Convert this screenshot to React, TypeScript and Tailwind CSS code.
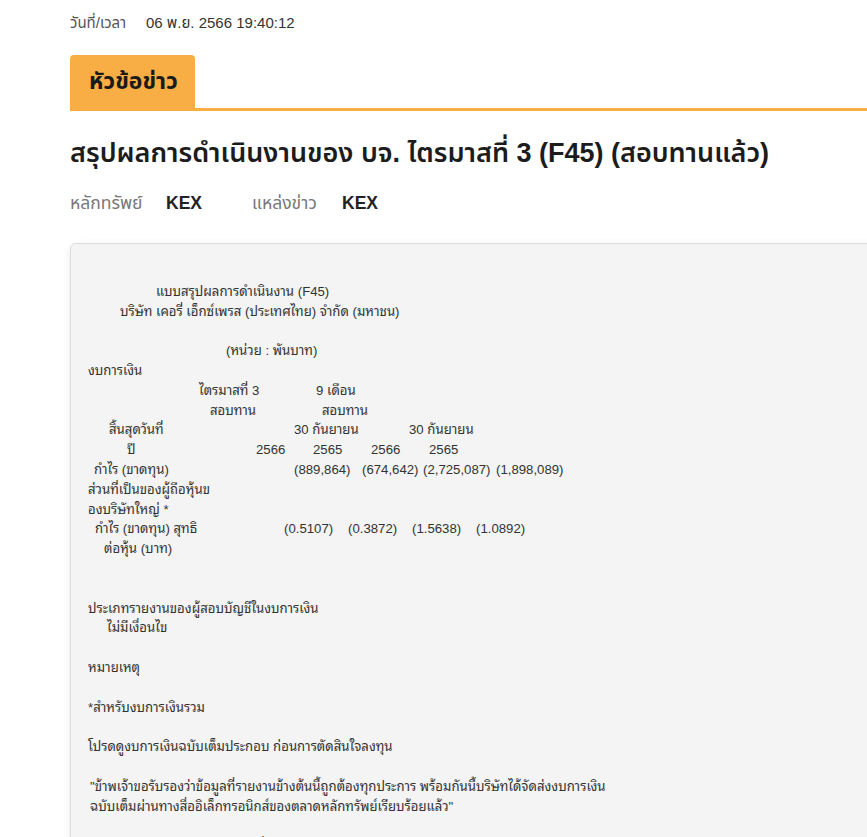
type Seg = [number, string];

// Each row of the announcement text: [x position on the page, text]
const BASE_X = 86;
const rows: Seg[][] = [
  [],
  [[156, "แบบสรุปผลการดำเนินงาน (F45)"]],
  [[120, "บริษัท เคอรี่ เอ็กซ์เพรส (ประเทศไทย) จำกัด (มหาชน)"]],
  [],
  [[226, "(หน่วย : พันบาท)"]],
  [[88, "งบการเงิน"]],
  [[199, "ไตรมาสที่ 3"], [316, "9 เดือน"]],
  [[210, "สอบทาน"], [322, "สอบทาน"]],
  [[109, "สิ้นสุดวันที่"], [294, "30 กันยายน"], [409, "30 กันยายน"]],
  [[127, "ปี"], [256, "2566"], [313, "2565"], [371, "2566"], [429, "2565"]],
  [[94, "กำไร (ขาดทุน)"], [294, "(889,864)"], [362, "(674,642)"], [423, "(2,725,087)"], [496, "(1,898,089)"]],
  [[88, "ส่วนที่เป็นของผู้ถือหุ้นข"]],
  [[88, "องบริษัทใหญ่ *"]],
  [[95, "กำไร (ขาดทุน) สุทธิ"], [284, "(0.5107)"], [348, "(0.3872)"], [412, "(1.5638)"], [476, "(1.0892)"]],
  [[104, "ต่อหุ้น (บาท)"]],
  [],
  [],
  [[88, "ประเภทรายงานของผู้สอบบัญชีในงบการเงิน"]],
  [[107, "ไม่มีเงื่อนไข"]],
  [],
  [[88, "หมายเหตุ"]],
  [],
  [[88, "*สำหรับงบการเงินรวม"]],
  [],
  [[88, "โปรดดูงบการเงินฉบับเต็มประกอบ ก่อนการตัดสินใจลงทุน"]],
  [],
  [[90, "\"ข้าพเจ้าขอรับรองว่าข้อมูลที่รายงานข้างต้นนี้ถูกต้องทุกประการ พร้อมกันนี้บริษัทได้จัดส่งงบการเงิน"]],
  [[90, "ฉบับเต็มผ่านทางสื่ออิเล็กทรอนิกส์ของตลาดหลักทรัพย์เรียบร้อยแล้ว\""]],
  [],
  [[220, "ลายมือชื่อ ____________________"]],
];

function TextRow({ segs }: { segs: Seg[] }) {
  if (segs.length === 0) return <div className="h-[19.8px]" />;
  return (
    <div className="flex h-[19.8px] items-center whitespace-pre" style={{ paddingLeft: segs[0][0] - BASE_X }}>
      {segs.map(([x, text], i) => {
        const next = segs[i + 1];
        return (
          <span key={i} className="shrink-0" style={next ? { width: next[0] - x } : undefined}>
            {text}
          </span>
        );
      })}
    </div>
  );
}

export default function App() {
  return (
    <div className="min-h-screen w-full overflow-hidden bg-white font-['Liberation_Sans','Noto_Sans_Thai',sans-serif] text-[#222]">
      <div className="w-[1100px] pl-[70px] pt-[12px]">
        {/* date / time */}
        <div className="flex h-[22px] items-center text-[15px]">
          <span className="w-[76px] text-[#555]">วันที่/เวลา</span>
          <span className="text-[#333]">06 พ.ย. 2566 19:40:12</span>
        </div>

        {/* section tab */}
        <div className="mt-[21px] border-b-[3px] border-[#f8ae45]">
          <div className="flex h-[53px] w-[125px] items-center rounded-t-[4px] bg-[#f8ae45] pl-[19px] text-[23px] font-bold text-[#1a1a1a]">
            หัวข้อข่าว
          </div>
        </div>

        <h1 className="mt-[18px] h-[48px] text-[27px] leading-[48px] font-semibold text-[#1c1c1c]">
          สรุปผลการดำเนินงานของ บจ. ไตรมาสที่ 3 (F45) (สอบทานแล้ว)
        </h1>

        <div className="mt-[12px] flex h-[28px] items-center text-[17.5px]">
          <span className="w-[96px] text-[#777]">หลักทรัพย์</span>
          <span className="w-[86px] font-bold text-[#222]">KEX</span>
          <span className="w-[90px] text-[#777]">แหล่งข่าว</span>
          <span className="font-bold text-[#222]">KEX</span>
        </div>

        <div className="mt-[26px] w-[1000px] rounded-[6px] border border-[#dcdcdc] bg-[#f4f4f4] px-[15px] pt-[18px] pb-[16px] shadow-[0_2px_8px_rgba(0,0,0,0.08)]">
          <div className="font-['Liberation_Sans','Noto_Sans_Thai_Looped',sans-serif] text-[13.2px] text-[#333]">
            {rows.map((segs, i) => (
              <TextRow key={i} segs={segs} />
            ))}
          </div>
        </div>
      </div>
    </div>
  );
}
